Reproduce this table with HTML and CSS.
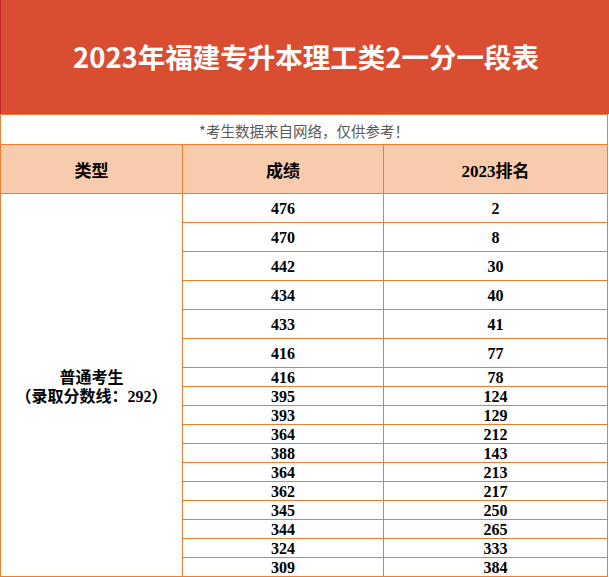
FILE: index.html
```html
<!DOCTYPE html>
<html lang="zh-CN">
<head>
<meta charset="utf-8">
<title>2023年福建专升本理工类2一分一段表</title>
<link rel="stylesheet" href="styles.css">
</head>
<body>
<div class="page">
  <div class="banner"><h1 class="banner-title">2023年福建专升本理工类2一分一段表</h1></div>
  <div class="sheet">
    <div class="cell note">*考生数据来自网络，仅供参考！</div>
    <div class="cell head">类型</div>
    <div class="cell head">成绩</div>
    <div class="cell head">2023排名</div>
    <div class="cell group"><span>普通考生</span><span>（录取分数线：292）</span></div>
    <div class="cell tall">476</div><div class="cell tall">2</div>
    <div class="cell tall">470</div><div class="cell tall">8</div>
    <div class="cell tall">442</div><div class="cell tall">30</div>
    <div class="cell tall">434</div><div class="cell tall">40</div>
    <div class="cell tall">433</div><div class="cell tall">41</div>
    <div class="cell tall">416</div><div class="cell tall">77</div>
    <div class="cell short">416</div><div class="cell short">78</div>
    <div class="cell short">395</div><div class="cell short">124</div>
    <div class="cell short">393</div><div class="cell short">129</div>
    <div class="cell short">364</div><div class="cell short">212</div>
    <div class="cell short">388</div><div class="cell short">143</div>
    <div class="cell short">364</div><div class="cell short">213</div>
    <div class="cell short">362</div><div class="cell short">217</div>
    <div class="cell short">345</div><div class="cell short">250</div>
    <div class="cell short">344</div><div class="cell short">265</div>
    <div class="cell short">324</div><div class="cell short">333</div>
    <div class="cell short">309</div><div class="cell short">384</div>
  </div>
</div>
</body>
</html>
```

FILE: styles.css
```css
html, body {
  margin: 0;
  padding: 0;
  background: #ffffff;
}
.page {
  width: 609px;
}
.banner {
  height: 114px;
  box-sizing: border-box;
  background: #d94d31;
  border-left: 1px solid #c4243a;
  display: flex;
  align-items: center;
  justify-content: center;
}
.banner-title {
  margin: 0;
  color: #ffffff;
  font-family: "Noto Sans CJK SC", sans-serif;
  font-weight: 700;
  font-size: 27.5px;
  line-height: 1;
  padding-left: 2px;
}
.sheet {
  display: grid;
  width: 608px;
  box-sizing: border-box;
  grid-template-columns: 182px 201px 224px;
  grid-template-rows: 30px 49px repeat(6, 29px) repeat(11, 19px);
  border-left: 1px solid #ed7d31;
  border-top: 1px solid #ed7d31;
  font-family: "Liberation Serif", "Noto Sans CJK SC", serif;
  font-weight: 700;
  color: #000000;
}
.cell {
  box-sizing: border-box;
  border-right: 1px solid #ed7d31;
  border-bottom: 1px solid #ed7d31;
  display: flex;
  align-items: center;
  justify-content: center;
  font-size: 16px;
}
.note {
  grid-column: 1 / 4;
  font-family: "Noto Sans CJK SC", sans-serif;
  font-weight: 400;
  font-size: 14.5px;
  color: #595959;
  padding-top: 1px;
}
.head {
  background: #f8cbad;
  font-size: 17px;
  padding-top: 1px;
}
.group {
  grid-row: 3 / 20;
  flex-direction: column;
  line-height: 19px;
  padding-top: 4px;
}
.tall {
  padding-top: 2px;
}
.short {
  line-height: 18px;
  padding-top: 2px;
}
```
